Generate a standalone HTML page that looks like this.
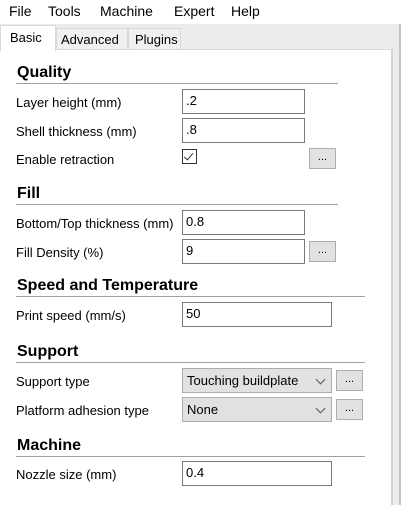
<!DOCTYPE html><html><head><style>
body{margin:0;width:403px;height:505px;overflow:hidden;background:#fff;font-family:"Liberation Sans",sans-serif;font-size:12px;color:#000;position:relative}
div{position:absolute;box-sizing:border-box}
.menu{top:3px;font-size:14px}
.t{font-size:13px}
.h{font-size:16px;font-weight:bold;left:17px}
.ln{left:16px;height:1px;background:#a0a0a0}
.in{left:182px;height:25px;border:1px solid #7a7a7a;background:#fff;padding:3px 0 0 3px;font-size:13px}
.btn{width:27px;height:21px;border:1px solid #adadad;background:#e1e1e1;text-align:center;font-size:11px;line-height:16px}
.sel{left:182px;width:150px;height:25px;border:1px solid #adadad;background:#e1e1e1;padding:4px 0 0 4px;font-size:13px}
.sel:after{content:"";position:absolute;right:7px;top:7px;width:6px;height:6px;border-right:1px solid #555;border-bottom:1px solid #555;transform:rotate(45deg)}
</style></head><body>
<div class="menu" style="left:9px">File</div>
<div class="menu" style="left:48px">Tools</div>
<div class="menu" style="left:100px">Machine</div>
<div class="menu" style="left:174px">Expert</div>
<div class="menu" style="left:231px">Help</div>
<div style="left:0;top:24px;width:401px;height:481px;background:#ececec;border-right:2px solid #c4c4c4"></div>
<div style="left:0;top:49px;width:393px;height:456px;background:#fff;border-top:1px solid #d9d9d9;border-right:2px solid #d4d4d4"></div>
<div style="left:0;top:25px;width:56px;height:26px;background:#fff;border:1px solid #d9d9d9;border-bottom:none;padding:4px 0 0 9px" class="t">Basic</div>
<div style="left:56px;top:28px;width:72px;height:21px;background:#f0f0f0;border:1px solid #d9d9d9;border-bottom:none;padding:3px 0 0 4px" class="t">Advanced</div>
<div style="left:128px;top:28px;width:53px;height:21px;background:#f0f0f0;border:1px solid #d9d9d9;border-bottom:none;padding:3px 0 0 6px" class="t">Plugins</div>

<div class="h" style="top:64px">Quality</div><div class="ln" style="top:83px;width:322px"></div>
<div class="t" style="left:16px;top:95px">Layer height (mm)</div><div class="in" style="top:89px;width:123px">.2</div>
<div class="t" style="left:16px;top:124px">Shell thickness (mm)</div><div class="in" style="top:118px;width:123px">.8</div>
<div class="t" style="left:16px;top:152px">Enable retraction</div>
<div style="left:182px;top:149px;width:15px;height:15px;border:1px solid #333"><div style="left:3px;top:1px;width:5px;height:9px;border-right:1.5px solid #333;border-bottom:1.5px solid #333;transform:rotate(40deg)"></div></div>
<div class="btn" style="left:309px;top:148px">...</div>

<div class="h" style="top:185px">Fill</div><div class="ln" style="top:204px;width:322px"></div>
<div class="t" style="left:16px;top:216px">Bottom/Top thickness (mm)</div><div class="in" style="top:210px;width:123px">0.8</div>
<div class="t" style="left:16px;top:245px">Fill Density (%)</div><div class="in" style="top:239px;width:123px">9</div>
<div class="btn" style="left:309px;top:241px">...</div>

<div class="h" style="top:277px">Speed and Temperature</div><div class="ln" style="top:296px;width:349px"></div>
<div class="t" style="left:16px;top:308px">Print speed (mm/s)</div><div class="in" style="top:302px;width:150px">50</div>

<div class="h" style="top:343px">Support</div><div class="ln" style="top:362px;width:349px"></div>
<div class="t" style="left:16px;top:374px">Support type</div><div class="sel" style="top:368px">Touching buildplate</div>
<div class="btn" style="left:336px;top:370px">...</div>
<div class="t" style="left:16px;top:403px">Platform adhesion type</div><div class="sel" style="top:397px">None</div>
<div class="btn" style="left:336px;top:399px">...</div>

<div class="h" style="top:437px">Machine</div><div class="ln" style="top:456px;width:349px"></div>
<div class="t" style="left:16px;top:467px">Nozzle size (mm)</div><div class="in" style="top:461px;width:150px">0.4</div>
</body></html>
